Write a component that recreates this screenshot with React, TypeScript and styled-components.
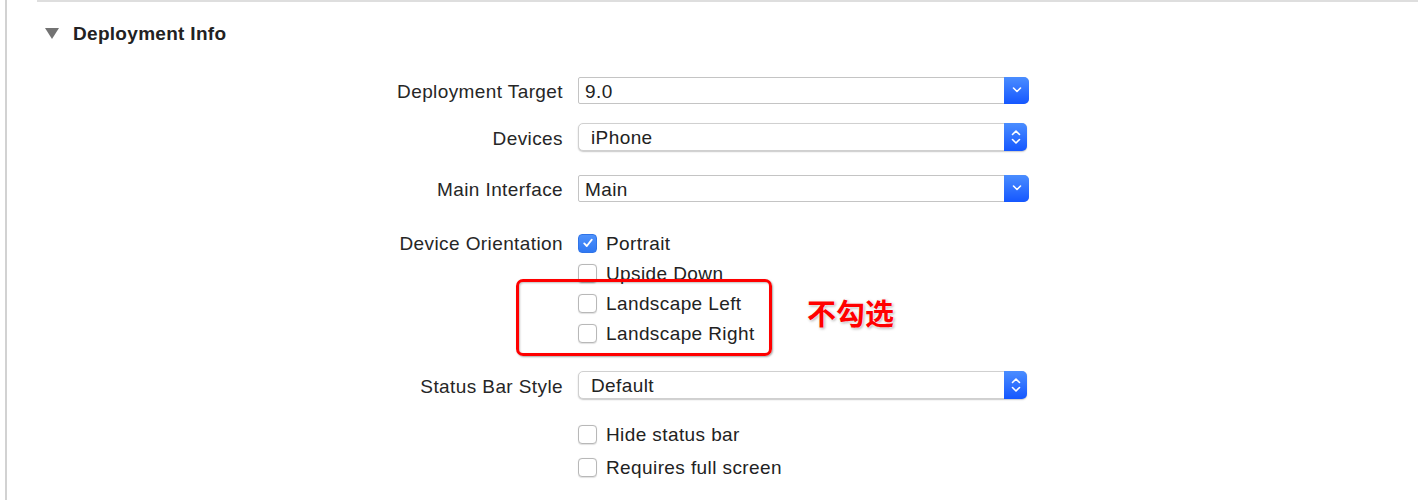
import React from "react";
import styled, { createGlobalStyle } from "styled-components";

const GlobalStyle = createGlobalStyle`
  html, body {
    margin: 0;
    padding: 0;
    background: #ffffff;
  }
  body {
    font-family: "Liberation Sans", Arial, sans-serif;
    color: #262626;
  }
`;

type Field =
  | { kind: "popup"; label: string; value: string; variant: "pull" | "stepper"; top: number }
  | { kind: "check"; label?: string; text: string; checked?: boolean; top: number };

const fields: Field[] = [
  { kind: "popup", label: "Deployment Target", value: "9.0", variant: "pull", top: 27 },
  { kind: "popup", label: "Devices", value: "iPhone", variant: "stepper", top: 19 },
  { kind: "popup", label: "Main Interface", value: "Main", variant: "pull", top: 23 },
  { kind: "check", label: "Device Orientation", text: "Portrait", checked: true, top: 25 },
  { kind: "check", text: "Upside Down", top: 0 },
  { kind: "check", text: "Landscape Left", top: 0 },
  { kind: "check", text: "Landscape Right", top: 0 },
  { kind: "popup", label: "Status Bar Style", value: "Default", variant: "stepper", top: 24 },
  { kind: "check", text: "Hide status bar", top: 19 },
  { kind: "check", text: "Requires full screen", top: 3 },
];

export default function App() {
  return (
    <>
      <GlobalStyle />
      <Page>
        <TopRule />
        <Header>
          <Disclosure />
          <Title>Deployment Info</Title>
        </Header>
        <Form>
          {fields.map((f, i) =>
            f.kind === "popup" ? (
              <PopupRow key={i} $top={f.top}>
                <Label>{f.label}</Label>
                <Popup $variant={f.variant}>
                  <PopupValue $variant={f.variant}>{f.value}</PopupValue>
                  <PopupButton $variant={f.variant}>
                    {f.variant === "pull" ? (
                      <svg width="10" height="6" viewBox="0 0 10 6">
                        <path d="M1.5 1 L5 4.5 L8.5 1" fill="none" stroke="#fff" strokeWidth="1.6" strokeLinecap="round" strokeLinejoin="round" />
                      </svg>
                    ) : (
                      <svg width="10" height="16" viewBox="0 0 10 16">
                        <path d="M1.5 5.5 L5 2 L8.5 5.5" fill="none" stroke="#fff" strokeWidth="1.6" strokeLinecap="round" strokeLinejoin="round" />
                        <path d="M1.5 10.5 L5 14 L8.5 10.5" fill="none" stroke="#fff" strokeWidth="1.6" strokeLinecap="round" strokeLinejoin="round" />
                      </svg>
                    )}
                  </PopupButton>
                </Popup>
              </PopupRow>
            ) : (
              <CheckRow key={i} $top={f.top}>
                <Label>{f.label ?? ""}</Label>
                <CheckItem>
                  <Box $checked={!!f.checked}>
                    {f.checked && (
                      <svg width="12" height="12" viewBox="0 0 12 12">
                        <path d="M2.2 6.4 L4.8 9 L9.8 2.6" fill="none" stroke="#fff" strokeWidth="1.8" strokeLinecap="round" strokeLinejoin="round" />
                      </svg>
                    )}
                  </Box>
                  <CheckText>{f.text}</CheckText>
                </CheckItem>
              </CheckRow>
            )
          )}
        </Form>
        <Highlight />
        <Note>不勾选</Note>
      </Page>
    </>
  );
}

const Page = styled.div`
  position: relative;
  height: 500px;
  margin-left: 5px;
  border-left: 2px solid #d2d2d2;
  overflow: hidden;
`;

const TopRule = styled.div`
  margin-left: 30px;
  height: 2px;
  background: #dedede;
`;

const Header = styled.div`
  display: flex;
  align-items: center;
  height: 30px;
  margin-top: 17px;
  padding-left: 38px;
`;

const Disclosure = styled.div`
  width: 0;
  height: 0;
  border-left: 7px solid transparent;
  border-right: 7px solid transparent;
  border-top: 11px solid #737373;
  margin-right: 14px;
  margin-top: -1px;
`;

const Title = styled.div`
  font-size: 19px;
  font-weight: bold;
  letter-spacing: 0.3px;
  color: #222;
`;

const Form = styled.div`
  display: flex;
  flex-direction: column;
`;

const RowBase = styled.div<{ $top: number }>`
  display: grid;
  grid-template-columns: 556px 452px;
  column-gap: 15px;
  align-items: center;
  margin-top: ${(p) => p.$top}px;
`;

const PopupRow = styled(RowBase)`
  height: 28px;
`;

const CheckRow = styled(RowBase)`
  height: 30px;
`;

const Label = styled.div`
  text-align: right;
  font-size: 19px;
  letter-spacing: 0.4px;
  padding-top: 4px;
  color: #262626;
`;

const Popup = styled.div<{ $variant: "pull" | "stepper" }>`
  display: flex;
  align-items: stretch;
  height: ${(p) => (p.$variant === "pull" ? 27 : 28)}px;
  width: ${(p) => (p.$variant === "pull" ? 451 : 449)}px;
  box-sizing: border-box;
  border: 1px solid ${(p) => (p.$variant === "pull" ? "#c4c4c4" : "#d0d0d0")};
  border-radius: ${(p) => (p.$variant === "pull" ? "2px 5px 5px 2px" : "5px")};
  background: #fff;
  box-shadow: ${(p) =>
    p.$variant === "stepper" ? "0 1px 1.5px rgba(0,0,0,0.22)" : "none"};
`;

const PopupValue = styled.div<{ $variant: "pull" | "stepper" }>`
  flex: 1;
  display: flex;
  align-items: center;
  padding-left: ${(p) => (p.$variant === "pull" ? 6 : 12)}px;
  padding-top: ${(p) => (p.$variant === "pull" ? 4 : 2)}px;
  font-size: 19px;
  letter-spacing: 0.4px;
  color: #222;
`;

const PopupButton = styled.div<{ $variant: "pull" | "stepper" }>`
  width: ${(p) => (p.$variant === "pull" ? 25 : 23)}px;
  margin: -1px -1px -1px 0;
  display: flex;
  align-items: center;
  justify-content: center;
  background: linear-gradient(#4a8dff, #1557ff);
  border-radius: 0 5px 5px 0;
`;

const CheckItem = styled.div`
  display: flex;
  align-items: center;
`;

const Box = styled.div<{ $checked: boolean }>`
  width: 19px;
  height: 19px;
  box-sizing: border-box;
  border-radius: 4px;
  display: flex;
  align-items: center;
  justify-content: center;
  margin-right: 9px;
  margin-top: 2px;
  background: ${(p) => (p.$checked ? "linear-gradient(#4f92fb, #2f78f3)" : "#fff")};
  border: 1px solid ${(p) => (p.$checked ? "#2f74e8" : "#b8b8b8")};
  box-shadow: ${(p) => (p.$checked ? "none" : "0 0.5px 1px rgba(0,0,0,0.12)")};
`;

const CheckText = styled.div`
  font-size: 19px;
  letter-spacing: 0.4px;
  padding-top: 4px;
  color: #222;
`;

const Highlight = styled.div`
  position: absolute;
  left: 509px;
  top: 279px;
  width: 256px;
  height: 77px;
  box-sizing: border-box;
  border: 3px solid #ff0000;
  border-radius: 7px;
  box-shadow: 1px 1px 2px rgba(0, 0, 0, 0.35), inset 1px 1px 2px rgba(0, 0, 0, 0.25);
`;

const Note = styled.div`
  position: absolute;
  left: 800px;
  top: 294px;
  font-family: "Noto Sans CJK SC", sans-serif;
  font-size: 29px;
  font-weight: bold;
  line-height: 37px;
  color: #ff0000;
  text-shadow: 0 0 2px #fff, 0 0 3px #fff, 1px 1px 3px rgba(0, 0, 0, 0.45);
`;
